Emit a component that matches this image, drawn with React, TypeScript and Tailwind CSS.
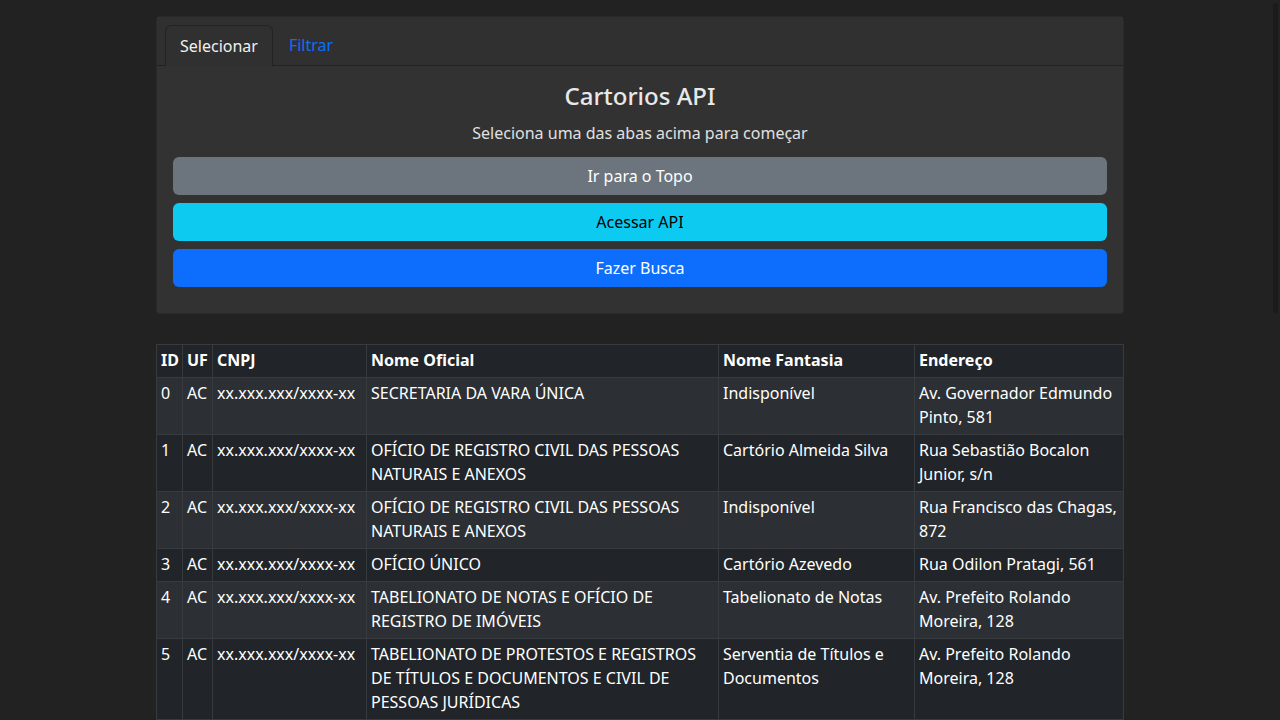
import React from "react";

type Row = {
  id: number;
  uf: string;
  cnpj: string;
  nome: string;
  fantasia: string;
  endereco: string;
};

const rows: Row[] = [
  { id: 0, uf: "AC", cnpj: "xx.xxx.xxx/xxxx-xx", nome: "SECRETARIA DA VARA ÚNICA", fantasia: "Indisponível", endereco: "Av. Governador Edmundo Pinto, 581" },
  { id: 1, uf: "AC", cnpj: "xx.xxx.xxx/xxxx-xx", nome: "OFÍCIO DE REGISTRO CIVIL DAS PESSOAS NATURAIS E ANEXOS", fantasia: "Cartório Almeida Silva", endereco: "Rua Sebastião Bocalon Junior, s/n" },
  { id: 2, uf: "AC", cnpj: "xx.xxx.xxx/xxxx-xx", nome: "OFÍCIO DE REGISTRO CIVIL DAS PESSOAS NATURAIS E ANEXOS", fantasia: "Indisponível", endereco: "Rua Francisco das Chagas, 872" },
  { id: 3, uf: "AC", cnpj: "xx.xxx.xxx/xxxx-xx", nome: "OFÍCIO ÚNICO", fantasia: "Cartório Azevedo", endereco: "Rua Odilon Pratagi, 561" },
  { id: 4, uf: "AC", cnpj: "xx.xxx.xxx/xxxx-xx", nome: "TABELIONATO DE NOTAS E OFÍCIO DE REGISTRO DE IMÓVEIS", fantasia: "Tabelionato de Notas", endereco: "Av. Prefeito Rolando Moreira, 128" },
  { id: 5, uf: "AC", cnpj: "xx.xxx.xxx/xxxx-xx", nome: "TABELIONATO DE PROTESTOS E REGISTROS DE TÍTULOS E DOCUMENTOS E CIVIL DE PESSOAS JURÍDICAS", fantasia: "Serventia de Títulos e Documentos", endereco: "Av. Prefeito Rolando Moreira, 128" },
];

const cell = "border border-[#373b3e] px-1 pt-[3px] pb-[5px] align-top";

export default function App() {
  return (
    <div className="relative h-[720px] overflow-hidden bg-[#222222] text-base leading-6 text-[#dee2e6] font-['Noto_Sans','Open_Sans',sans-serif]">
      <div className="mx-auto w-[968px] pt-4">
        {/* card */}
        <div className="rounded-sm border border-[#2a2a2a] bg-[#323232]">
          <div className="flex border-b border-[#232323] bg-[#303030] px-2 pt-2">
            <div className="-mb-px rounded-t-md border border-b-0 border-[#232323] bg-[#303030] px-[14px] py-2 text-[#f0f0f0]">
              Selecionar
            </div>
            <div className="px-[16px] py-2 text-[#0d6efd]">Filtrar</div>
          </div>
          <div className="px-4 pt-[15px] pb-[26px] text-center">
            <h2 className="text-[24px] leading-[29px] font-medium text-[#e8e8e8]">Cartorios API</h2>
            <p className="mt-[11px] mb-3 text-[#e0e0e0]">Seleciona uma das abas acima para começar</p>
            <div className="flex flex-col gap-2">
              <button className="h-[38px] rounded-md bg-[#6c757d] text-white">Ir para o Topo</button>
              <button className="h-[38px] rounded-md bg-[#0dcaf0] text-black">Acessar API</button>
              <button className="h-[38px] rounded-md bg-[#0d6efd] text-white">Fazer Busca</button>
            </div>
          </div>
        </div>

        {/* table */}
        <table className="mt-[30px] w-full table-fixed border-collapse text-left text-white">
          <colgroup>
            <col className="w-[26px]" />
            <col className="w-[30px]" />
            <col className="w-[154px]" />
            <col className="w-[352px]" />
            <col className="w-[196px]" />
            <col />
          </colgroup>
          <thead>
            <tr className="bg-[#212529] font-bold">
              <th className={cell}>ID</th>
              <th className={cell}>UF</th>
              <th className={cell}>CNPJ</th>
              <th className={cell}>Nome Oficial</th>
              <th className={cell}>Nome Fantasia</th>
              <th className={cell}>Endereço</th>
            </tr>
          </thead>
          <tbody>
            {rows.map((r, i) => (
              <tr key={r.id} className={i % 2 === 0 ? "bg-[#2c3034]" : "bg-[#212529]"}>
                <td className={cell}>{r.id}</td>
                <td className={cell}>{r.uf}</td>
                <td className={`${cell} whitespace-nowrap`}>{r.cnpj}</td>
                <td className={cell}>{r.nome}</td>
                <td className={cell}>{r.fantasia}</td>
                <td className={cell}>{r.endereco}</td>
              </tr>
            ))}
          </tbody>
        </table>
      </div>

      {/* scrollbar */}
      <div className="absolute top-[3px] right-[2px] h-[310px] w-[5px] rounded-full bg-[#1b1b1b]" />
    </div>
  );
}
